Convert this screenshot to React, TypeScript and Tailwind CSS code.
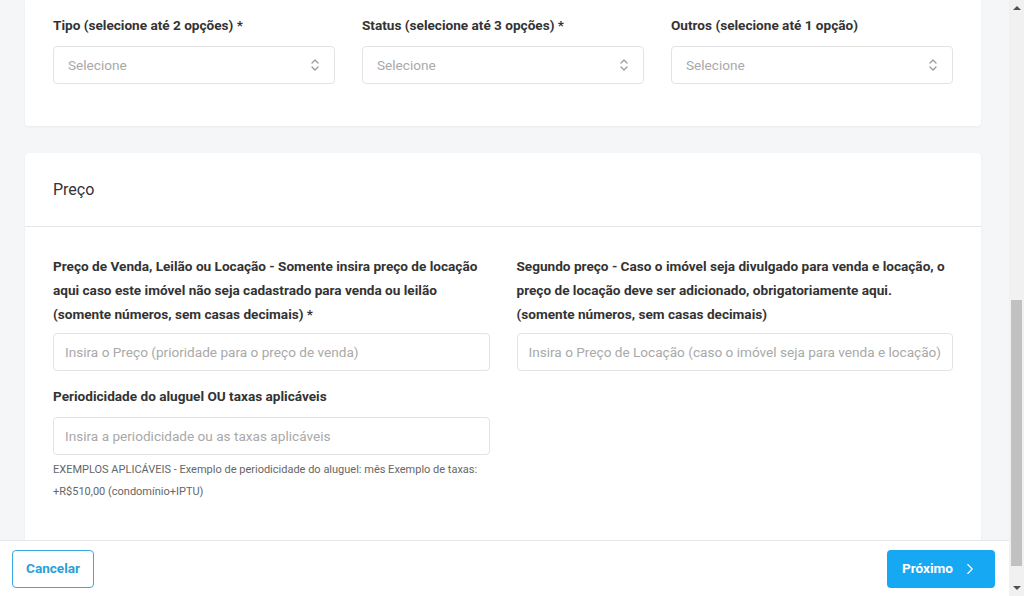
import { ChevronRight } from "lucide-react";

function SelectBox() {
  return (
    <div className="flex h-[38px] items-center justify-between rounded border border-[#e3e3e3] bg-white pl-[14px] pr-[14px] text-[13.6px] text-[#a9a9a9]">
      <span>Selecione</span>
      <svg width="10" height="14" viewBox="0 0 10 14" fill="none" stroke="#9a9a9a" strokeWidth="1.3" strokeLinecap="round" strokeLinejoin="round">
        <path d="M2 5 L5 2 L8 5" />
        <path d="M2 9 L5 12 L8 9" />
      </svg>
    </div>
  );
}

function TextInput({ placeholder }: { placeholder: string }) {
  return (
    <div className="flex h-[38px] items-center rounded border border-[#e3e3e3] bg-white px-[11px] text-[13.6px] text-[#a9a9a9] whitespace-nowrap overflow-hidden">
      {placeholder}
    </div>
  );
}

export default function App() {
  const selects = [
    "Tipo (selecione até 2 opções) *",
    "Status (selecione até 3 opções) *",
    "Outros (selecione até 1 opção)",
  ];

  return (
    <div
      className="flex h-[596px] w-[1024px] overflow-hidden bg-[#f5f6f8] text-[#333]"
      style={{ fontFamily: "Roboto, 'Liberation Sans', sans-serif" }}
    >
      <div className="flex min-w-0 flex-1 flex-col">
        <main className="flex-1 overflow-hidden pl-[25px] pr-[28px]">
          <section className="rounded-b bg-white px-[28px] pt-[15px] pb-[42px] shadow-[0_1px_3px_rgba(0,0,0,0.05)]">
            <div className="grid grid-cols-3 gap-[27px]">
              {selects.map((label) => (
                <div key={label}>
                  <div className="mb-[11px] text-[13.6px] font-bold leading-[20px]">{label}</div>
                  <SelectBox />
                </div>
              ))}
            </div>
          </section>

          <section className="mt-[27px] rounded bg-white shadow-[0_1px_3px_rgba(0,0,0,0.05)]">
            <div className="flex h-[74px] items-center border-b border-[#e6e6e6] px-[28px] text-[16px] text-[#333]">
              Preço
            </div>
            <div className="px-[28px] pt-[27px] pb-[40px]">
              <div className="grid grid-cols-2 gap-[27px]">
                <div>
                  <div className="mb-[7px] text-[13.6px] font-bold leading-[24px]">
                    Preço de Venda, Leilão ou Locação - Somente insira preço de locação aqui caso este imóvel não seja cadastrado para venda ou leilão (somente números, sem casas decimais) *
                  </div>
                  <TextInput placeholder="Insira o Preço (prioridade para o preço de venda)" />
                </div>
                <div>
                  <div className="mb-[7px] text-[13.6px] font-bold leading-[24px]">
                    Segundo preço - Caso o imóvel seja divulgado para venda e locação, o preço de locação deve ser adicionado, obrigatoriamente aqui.
                    <br />
                    (somente números, sem casas decimais)
                  </div>
                  <TextInput placeholder="Insira o Preço de Locação (caso o imóvel seja para venda e locação)" />
                </div>
              </div>
              <div className="mt-[13px] grid grid-cols-2 gap-[27px]">
                <div>
                  <div className="mb-[9px] text-[13.6px] font-bold leading-[24px]">
                    Periodicidade do aluguel OU taxas aplicáveis
                  </div>
                  <TextInput placeholder="Insira a periodicidade ou as taxas aplicáveis" />
                  <div className="mt-[4px] text-[11px] leading-[22px] text-[#666]">
                    EXEMPLOS APLICÁVEIS - Exemplo de periodicidade do aluguel: mês Exemplo de taxas: +R$510,00 (condomínio+IPTU)
                  </div>
                </div>
              </div>
            </div>
          </section>
        </main>

        <footer className="flex h-[56px] shrink-0 items-center justify-between border-t border-[#e6e6e6] bg-white pl-[12px] pr-[14px]">
          <button className="h-[38px] rounded border border-[#3aa9e0] px-[13px] text-[13.6px] font-bold text-[#2a9fd8]">
            Cancelar
          </button>
          <button className="flex h-[38px] items-center gap-[8px] rounded bg-[#17a8f3] pl-[15px] pr-[16px] text-[13.6px] font-bold text-white">
            Próximo
            <ChevronRight className="h-[18px] w-[18px]" strokeWidth={1.5} />
          </button>
        </footer>
      </div>

      <div className="flex w-[15px] shrink-0 flex-col bg-[#f1f1f1]">
        <div className="flex h-[16px] items-center justify-center">
          <div className="h-0 w-0 border-x-[4px] border-b-[4px] border-x-transparent border-b-[#505050]" />
        </div>
        <div className="flex-1 px-[2px] pt-[284px] pb-[14px]">
          <div className="h-full bg-[#c1c1c1]" />
        </div>
        <div className="flex h-[16px] items-center justify-center">
          <div className="h-0 w-0 border-x-[4px] border-t-[4px] border-x-transparent border-t-[#505050]" />
        </div>
      </div>
    </div>
  );
}
